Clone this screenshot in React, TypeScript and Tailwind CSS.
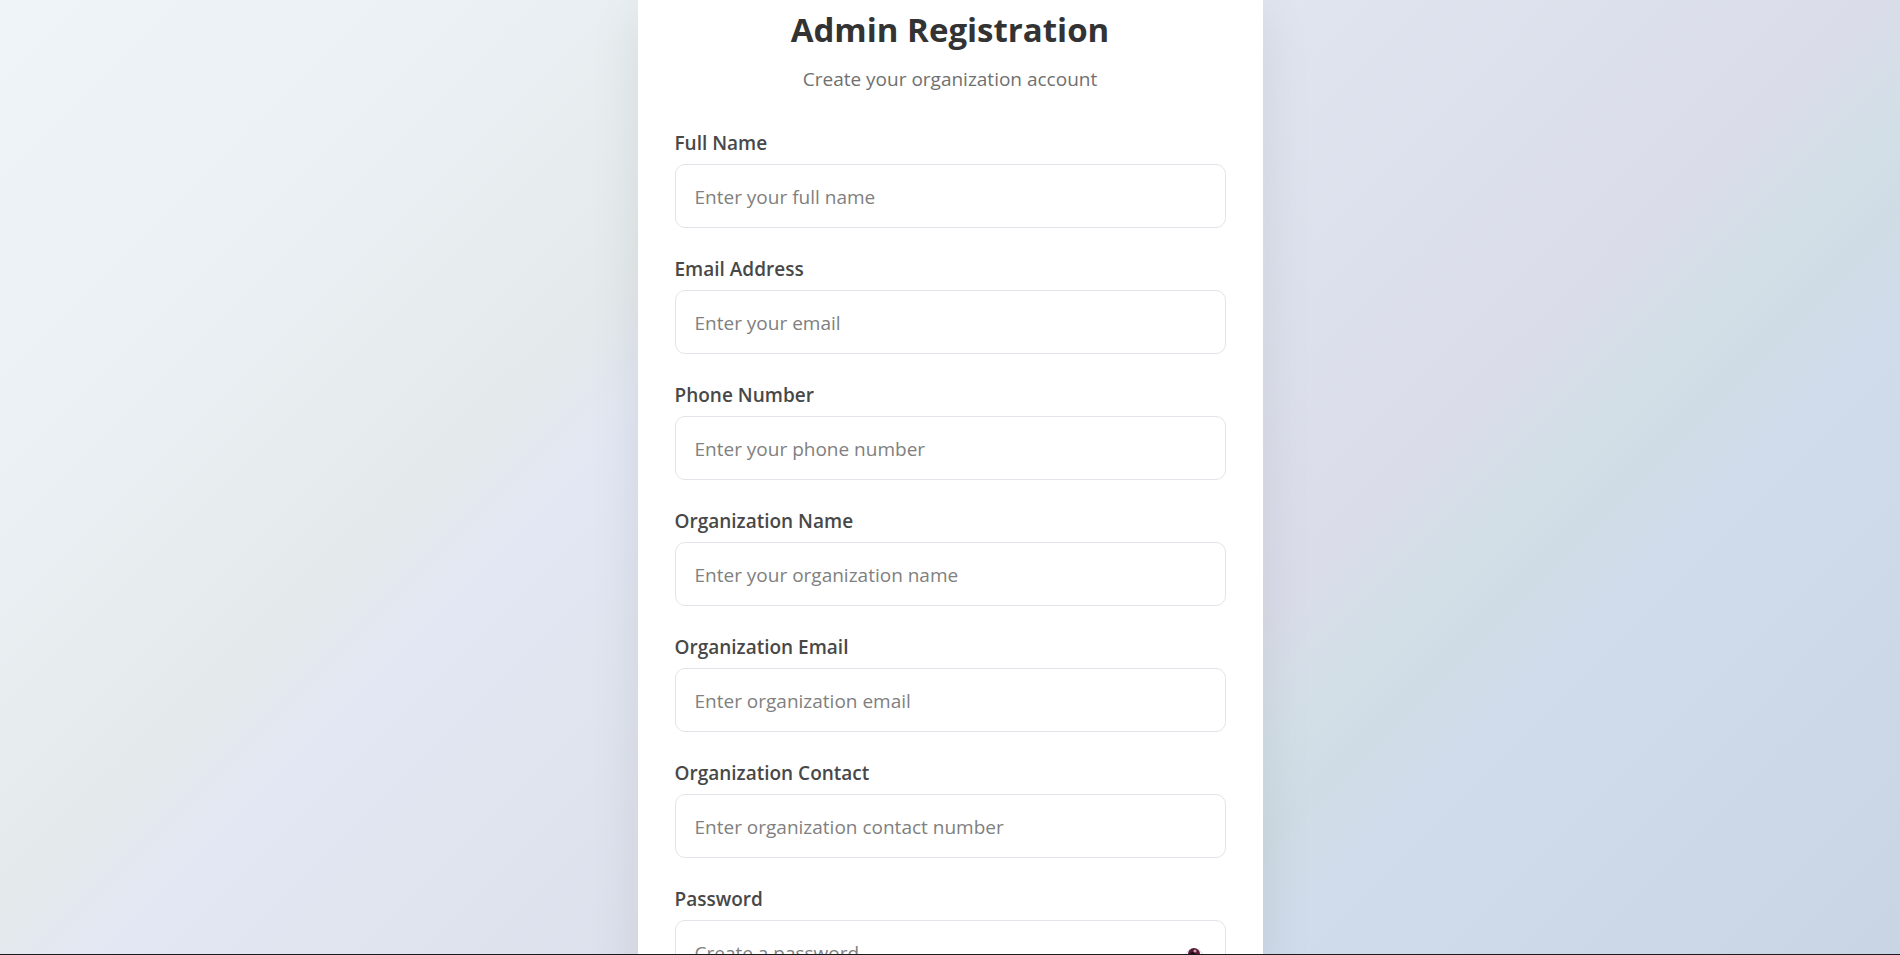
interface FieldProps {
  id: string;
  label: string;
  placeholder: string;
  type?: string;
}

const labelClass = 'block mb-[7px] text-[19px] leading-7 font-semibold text-[#484848]';

const inputClass =
  'block w-full h-16 px-[19px] pt-[2px] bg-white border border-[#e1e4e8] rounded-[10px] text-[19px] text-[#333333] placeholder:text-[#808080] outline-none';

const fields: FieldProps[] = [
  { id: 'fullName', label: 'Full Name', placeholder: 'Enter your full name' },
  { id: 'email', label: 'Email Address', placeholder: 'Enter your email', type: 'email' },
  { id: 'phone', label: 'Phone Number', placeholder: 'Enter your phone number', type: 'tel' },
  { id: 'orgName', label: 'Organization Name', placeholder: 'Enter your organization name' },
  { id: 'orgEmail', label: 'Organization Email', placeholder: 'Enter organization email', type: 'email' },
  { id: 'orgContact', label: 'Organization Contact', placeholder: 'Enter organization contact number', type: 'tel' },
];

function EyeIcon() {
  return (
    <svg className="size-6" viewBox="0 0 24 24" aria-hidden="true">
      <path d="M3 15C7 7 17 7 21 15 17 22 7 22 3 15Z" fill="#ffffff" stroke="#d8d0d4" />
      <circle cx="12" cy="14" r="6" fill="#5a1a34" />
      <circle cx="11" cy="15" r="3" fill="#1e0610" />
      <circle cx="13" cy="11" r="1.5" fill="#c9a9b6" />
    </svg>
  );
}

function Field({ id, label, placeholder, type = 'text' }: FieldProps) {
  return (
    <div>
      <label htmlFor={id} className={labelClass}>
        {label}
      </label>
      <input id={id} name={id} type={type} placeholder={placeholder} className={inputClass} />
    </div>
  );
}

export default function App() {
  return (
    <div className="h-screen overflow-hidden border-b border-[#1c1a1f] bg-[linear-gradient(135deg,#eff4f9_0%,#ebf0f4_18%,#e4e9ec_32%,#e2e7f3_37%,#dfe4ef_46%,#dadde9_66%,#d2dfe7_71%,#d0dce5_74%,#d0dcec_78%,#c9d5e5_100%)] font-['Open_Sans','Noto_Sans',sans-serif]">
      <main className="mx-auto w-full max-w-[625px] min-h-full px-[37px] pt-2 pb-9 bg-white shadow-[0_12px_50px_rgba(0,0,0,0.08)]">
        <header className="mb-9 text-center">
          <h1 className="text-[33px] leading-11 font-bold text-[#333333]">Admin Registration</h1>
          <p className="mt-[13px] text-[19px] leading-7 text-[#707070]">Create your organization account</p>
        </header>

        <form className="flex flex-col gap-[27px]">
          {fields.map((field) => (
            <Field key={field.id} {...field} />
          ))}

          <div>
            <label htmlFor="password" className={labelClass}>
              Password
            </label>
            <div className="relative">
              <input id="password" name="password" type="password" placeholder="Create a password" className={inputClass} />
              <button type="button" aria-label="Show password" className="absolute inset-y-0 right-5 flex items-center">
                <EyeIcon />
              </button>
            </div>
          </div>
        </form>
      </main>
    </div>
  );
}
